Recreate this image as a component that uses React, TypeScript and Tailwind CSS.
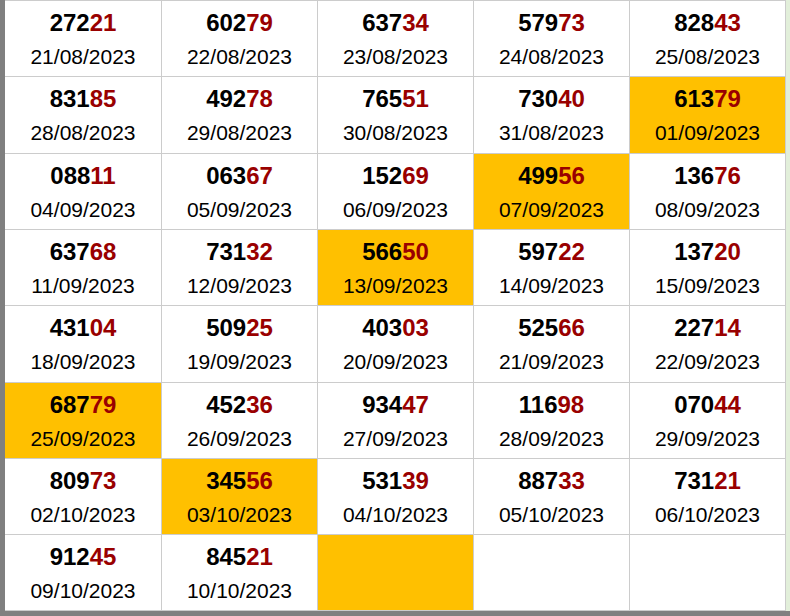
const rows: [string, string, boolean][][] = [
  [['27221', '21/08/2023', false], ['60279', '22/08/2023', false], ['63734', '23/08/2023', false], ['57973', '24/08/2023', false], ['82843', '25/08/2023', false]],
  [['83185', '28/08/2023', false], ['49278', '29/08/2023', false], ['76551', '30/08/2023', false], ['73040', '31/08/2023', false], ['61379', '01/09/2023', true]],
  [['08811', '04/09/2023', false], ['06367', '05/09/2023', false], ['15269', '06/09/2023', false], ['49956', '07/09/2023', true], ['13676', '08/09/2023', false]],
  [['63768', '11/09/2023', false], ['73132', '12/09/2023', false], ['56650', '13/09/2023', true], ['59722', '14/09/2023', false], ['13720', '15/09/2023', false]],
  [['43104', '18/09/2023', false], ['50925', '19/09/2023', false], ['40303', '20/09/2023', false], ['52566', '21/09/2023', false], ['22714', '22/09/2023', false]],
  [['68779', '25/09/2023', true], ['45236', '26/09/2023', false], ['93447', '27/09/2023', false], ['11698', '28/09/2023', false], ['07044', '29/09/2023', false]],
  [['80973', '02/10/2023', false], ['34556', '03/10/2023', true], ['53139', '04/10/2023', false], ['88733', '05/10/2023', false], ['73121', '06/10/2023', false]],
  [['91245', '09/10/2023', false], ['84521', '10/10/2023', false], ['', '', true], ['', '', false], ['', '', false]],
]

function Cell({ num, date, hl }: { num: string; date: string; hl: boolean }) {
  return (
    <div className={`flex flex-col items-center pt-[8px] ${hl ? 'bg-[#ffc000]' : 'bg-white'}`}>
      {num && (
        <>
          <div className="text-[24px] leading-[28px] font-bold text-black">
            {num.slice(0, 3)}
            <span className="text-[#990000]">{num.slice(3)}</span>
          </div>
          <div className="mt-[8px] text-[21px] leading-[24px] text-black">{date}</div>
        </>
      )}
    </div>
  )
}

export default function App() {
  return (
    <div className="w-[790px] h-[616px] flex flex-col bg-[#808080]" style={{ fontFamily: '"Liberation Sans", Arial, sans-serif' }}>
      <div className="flex h-[611px]">
        {/* left frame */}
        <div className="w-[5px] bg-[#808080]" />

        {/* sheet */}
        <div className="w-[781px] grid grid-cols-[156px_155px_155px_155px_155px] grid-rows-[75px_76px_75px_75px_76px_75px_75px_75px] gap-px pt-px pb-px pr-px bg-[#cccccc]">
          {rows.flat().map(([num, date, hl], i) => (
            <Cell key={i} num={num} date={date} hl={hl} />
          ))}
        </div>

        {/* next column */}
        <div className="w-[4px] bg-[#e2efda]" />
      </div>
      <div className="h-[5px] bg-[#808080]" />
    </div>
  )
}
